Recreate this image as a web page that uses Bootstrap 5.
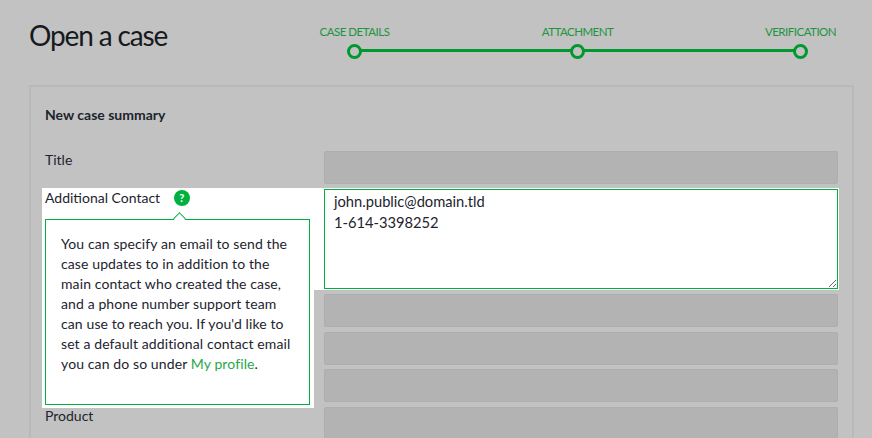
<!doctype html>
<html lang="en"><head><meta charset="utf-8"><title>Open a case</title>
<link rel="stylesheet" href="https://cdn.jsdelivr.net/npm/bootstrap@5.3.0/dist/css/bootstrap.min.css">
<style>
html,body{height:438px;overflow:hidden}
body{background:#c2c2c2;color:#1d242e;font-family:"Lato","Liberation Sans",sans-serif;font-size:14px;line-height:20px}
.page-head{padding:16px 35.5px 0 29px;height:85px}
.page-title{font-size:28px;line-height:38px;font-weight:400;margin:0;color:#161a20;letter-spacing:-1.15px}
.stepper{width:518px;position:relative;height:40px;margin-top:6px}
.stepper::before{content:"";position:absolute;left:36px;right:36px;top:27px;height:3px;background:#00982f}
.step-item{width:72px;display:flex;flex-direction:column;align-items:center;position:relative;font-size:11.5px;letter-spacing:-.5px;line-height:20px;color:#1c9440;white-space:nowrap;text-transform:uppercase}
.step-dot{width:15px;height:15px;border-radius:50%;border:3px solid #00982f;background:#c2c2c2;margin-top:2px}
.panel-box{margin:0 18px 0 29px;border:2px solid #b9b9b9;border-bottom:0;height:360px;padding:18px 14px 0 14px}
.panel-title{font-weight:700;font-size:14px;line-height:20px;margin:0 0 26px}
.form-line{display:flex;height:37.5px}
.form-line-title{height:37px}
.line-label{width:279px;flex:none;line-height:20px;margin-top:-1px}
.ghost-field{flex:1;height:33px;background:#b3b3b3;border:1px solid #aeaeae;border-radius:2px}
.form-line-open{height:102px;background:#fff;margin:0 -1px 4px -3px;padding:1px 1px 1px 3px;position:relative;z-index:2}
.line-field{flex:1;height:100px;border:1px solid #00b140;padding:1px 9px;background:#fff;color:#1d242e;font-size:14.7px;line-height:21px;border-radius:0;outline:0;display:block;resize:both}
.help-dot{display:inline-flex;align-items:center;justify-content:center;width:16px;height:16px;border-radius:50%;background:#00b140;color:#fff;font-size:11px;font-weight:700;line-height:1;margin-left:10px;vertical-align:1px}
.help-pop{position:absolute;left:0;top:31px;width:272px;height:189px;background:#fff;padding:0 4px 3px 3px;z-index:3}
.help-inner{height:186px;border:1px solid #00b140;padding:14px 15px;line-height:20px;background:#fff;position:relative;letter-spacing:.11px}
.help-inner::before{content:"";position:absolute;left:129px;top:-6px;width:9px;height:9px;background:#fff;border-left:1px solid #00b140;border-top:1px solid #00b140;transform:rotate(45deg)}
.help-inner a{color:#1fa84c;text-decoration:none}
</style></head>
<body>
<div class="page-head d-flex justify-content-between align-items-start">
  <h1 class="page-title">Open a case</h1>
  <div class="stepper d-flex justify-content-between">
    <div class="step-item">Case details<span class="step-dot"></span></div>
    <div class="step-item">Attachment<span class="step-dot"></span></div>
    <div class="step-item">Verification<span class="step-dot"></span></div>
  </div>
</div>
<div class="panel-box">
  <p class="panel-title">New case summary</p>
  <div class="form-line form-line-title"><div class="line-label">Title</div><div class="ghost-field"></div></div>
  <div class="form-line form-line-open">
    <div class="line-label">Additional Contact <span class="help-dot">?</span></div>
    <textarea class="line-field" aria-label="Additional Contact">john.public@domain.tld
1-614-3398252</textarea>
    <div class="help-pop"><div class="help-inner">You can specify an email to send the case updates to in addition to the main contact who created the case, and a phone number support team can use to reach you. If you'd like to set a default additional contact email you can do so under <a href="#">My profile</a>.</div></div>
  </div>
  <div class="form-line"><div class="line-label"></div><div class="ghost-field"></div></div>
  <div class="form-line"><div class="line-label"></div><div class="ghost-field"></div></div>
  <div class="form-line"><div class="line-label"></div><div class="ghost-field"></div></div>
  <div class="form-line"><div class="line-label">Product</div><div class="ghost-field"></div></div>
</div>
<script src="https://cdn.jsdelivr.net/npm/bootstrap@5.3.0/dist/js/bootstrap.bundle.min.js"></script>
</body></html>
